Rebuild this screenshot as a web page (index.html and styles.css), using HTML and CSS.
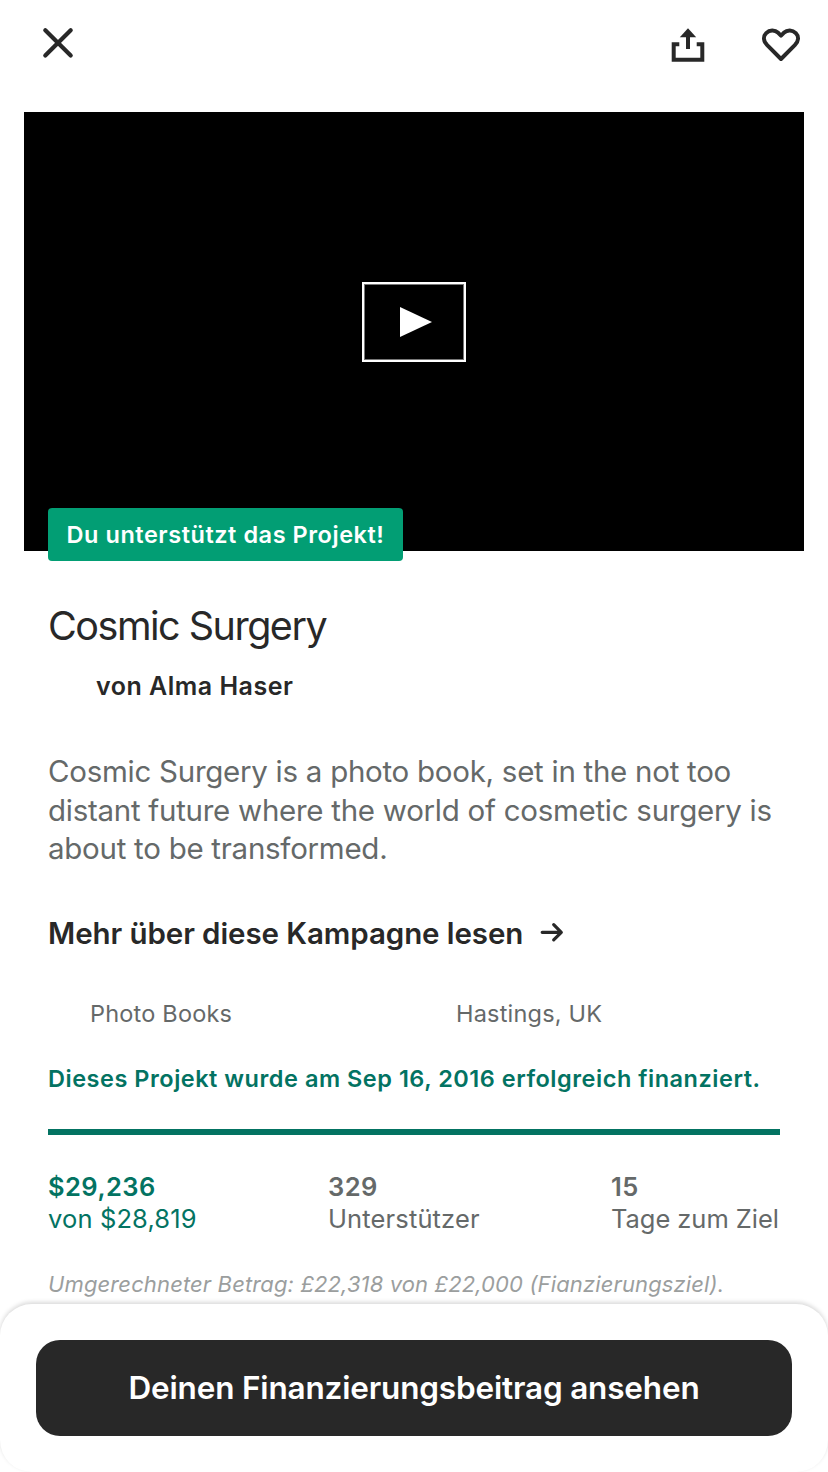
FILE: index.html
```html
<!DOCTYPE html>
<html lang="de">
<head>
<meta charset="utf-8">
<title>Cosmic Surgery</title>
<link rel="stylesheet" href="styles.css">
</head>
<body>
<div class="screen">
  <header class="toolbar">
    <svg class="icon-close" viewBox="0 0 32 32"><path d="M3.300 3.200 28.700 28.600M28.700 3.200 3.300 28.600"/></svg>
    <div class="actions">
      <svg class="icon-share" viewBox="0 0 34 34"><path d="M8.300 16.300H2.700V31.700H31.300V16.300H25.700M17 8V21"/><path class="solid" d="M17 .3 25.200 9.300H8.800Z"/></svg>
      <svg class="icon-heart" viewBox="0 0 40 36"><path d="M20 32 6.200 18.200C2.200 14 2 9.300 5.200 6.100C8.600 2.600 13.700 2.500 17.200 5.800L20 8.600 22.800 5.800C26.300 2.500 31.400 2.600 34.800 6.100C38 9.300 37.800 14 33.800 18.200Z"/></svg>
    </div>
  </header>
  <section class="video">
    <div class="play"><svg viewBox="0 0 32 30"><path d="M0 0 32 15 0 30Z"/></svg></div>
    <div class="badge">Du unterstützt das Projekt!</div>
  </section>
  <main class="content">
    <h1 class="title">Cosmic Surgery</h1>
    <p class="author">von Alma Haser</p>
    <p class="blurb">Cosmic Surgery is a photo book, set in the not too<br>distant future where the world of cosmetic surgery is<br>about to be transformed.</p>
    <div class="more"><span>Mehr über diese Kampagne lesen</span><svg viewBox="0 0 24 22"><path d="M2.200 10.300H21M13.700 2.700 21.300 10.300 13.700 17.900"/></svg></div>
    <div class="meta"><span>Photo Books</span><span>Hastings, UK</span></div>
    <p class="status">Dieses Projekt wurde am Sep 16, 2016 erfolgreich finanziert.</p>
    <div class="progress"></div>
    <div class="stats">
      <div class="stat pledged"><b>$29,236</b><span>von $28,819</span></div>
      <div class="stat"><b>329</b><span>Unterstützer</span></div>
      <div class="stat"><b>15</b><span>Tage zum Ziel</span></div>
    </div>
    <p class="note">Umgerechneter Betrag: £22,318 von £22,000 (Fianzierungsziel).</p>
  </main>
  <footer class="footer"><button class="cta">Deinen Finanzierungsbeitrag ansehen</button></footer>
</div>
</body>
</html>
```
FILE: styles.css
```css
* { box-sizing: border-box; }
body { margin: 0; background: #fff; font-family: Inter, "Liberation Sans", sans-serif; color: #282828; }
.screen { width: 828px; height: 1472px; overflow: hidden; display: flex; flex-direction: column; }
svg { display: block; fill: none; stroke: #282828; }
h1, p { margin: 0; font-weight: 400; white-space: nowrap; }
.toolbar { height: 112px; flex: none; display: flex; justify-content: space-between; padding: 27px 27px 0 42px; }
.icon-close { width: 32px; height: 32px; stroke-width: 4.2; stroke-linecap: round; }
.actions { display: flex; gap: 56px; }
.icon-share { width: 34px; height: 34px; margin-top: 1px; stroke-width: 4; }
.icon-share .solid { fill: #282828; stroke: none; }
.icon-heart { width: 40px; height: 36px; stroke-width: 4; stroke-linejoin: round; }
.video { height: 439px; flex: none; margin: 0 24px; background: #000; position: relative; padding-top: 170px; }
.play { width: 104px; height: 80px; margin: 0 auto; border: 2px solid #fff; box-shadow: inset 0 0 0 1px #777; padding-left: 4px; display: flex; align-items: center; justify-content: center; }
.play svg { width: 32px; height: 30px; fill: #fff; stroke: none; }
.badge { position: absolute; left: 24px; top: 396px; width: 355px; height: 53px; border-radius: 4px; background: #029e74; color: #fff; display: flex; align-items: center; justify-content: center; font-size: 23.5px; font-weight: 600; letter-spacing: 0.54px; white-space: nowrap; }
.content { flex: none; height: 753px; padding: 50px 48px 0; }
.title { font-size: 39.5px; line-height: 51px; letter-spacing: -1.5px; }
.author { margin-top: 18px; padding-left: 48px; font-size: 25px; line-height: 32px; font-weight: 600; letter-spacing: 0.5px; }
.blurb { margin-top: 50px; font-size: 29.5px; line-height: 38.5px; letter-spacing: -0.27px; color: #656969; }
.more { margin-top: 45px; display: flex; align-items: center; gap: 17px; height: 40px; font-size: 29.5px; font-weight: 600; letter-spacing: -0.08px; white-space: nowrap; }
.more svg { width: 24px; height: 22px; stroke-width: 3.2; stroke-linecap: round; stroke-linejoin: round; }
.meta { margin-top: 45px; display: grid; grid-template-columns: 366px 1fr; padding-left: 42px; font-size: 23.5px; line-height: 32px; letter-spacing: 0.2px; color: #656969; }
.status { margin-top: 33px; font-size: 23.5px; line-height: 32px; font-weight: 600; letter-spacing: 0.52px; color: #037362; }
.progress { margin-top: 34px; height: 6px; background: #037362; }
.stats { margin-top: 36px; display: grid; grid-template-columns: 280px 283px 1fr; font-size: 25.5px; line-height: 32px; letter-spacing: 0.14px; color: #656969; white-space: nowrap; }
.stat b, .stat span { display: block; }
.stat b { font-weight: 600; letter-spacing: 0.45px; }
.stat:last-child span { letter-spacing: -0.05px; }
.pledged { color: #037362; }
.note { margin-top: 34px; font-size: 22px; line-height: 30px; font-style: italic; letter-spacing: 0.13px; color: #9b9e9e; }
.footer { position: relative; flex: none; height: 168px; padding: 36px 36px 0; background: #fff; border-radius: 32px; box-shadow: 0 -2px 4px rgba(0,0,0,.15); }
.cta { display: block; width: 756px; height: 96px; padding: 0 0 1px; border: 0; border-radius: 24px; background: #282828; color: #fff; font: 600 31.5px Inter, "Liberation Sans", sans-serif; letter-spacing: -0.17px; white-space: nowrap; }
```
